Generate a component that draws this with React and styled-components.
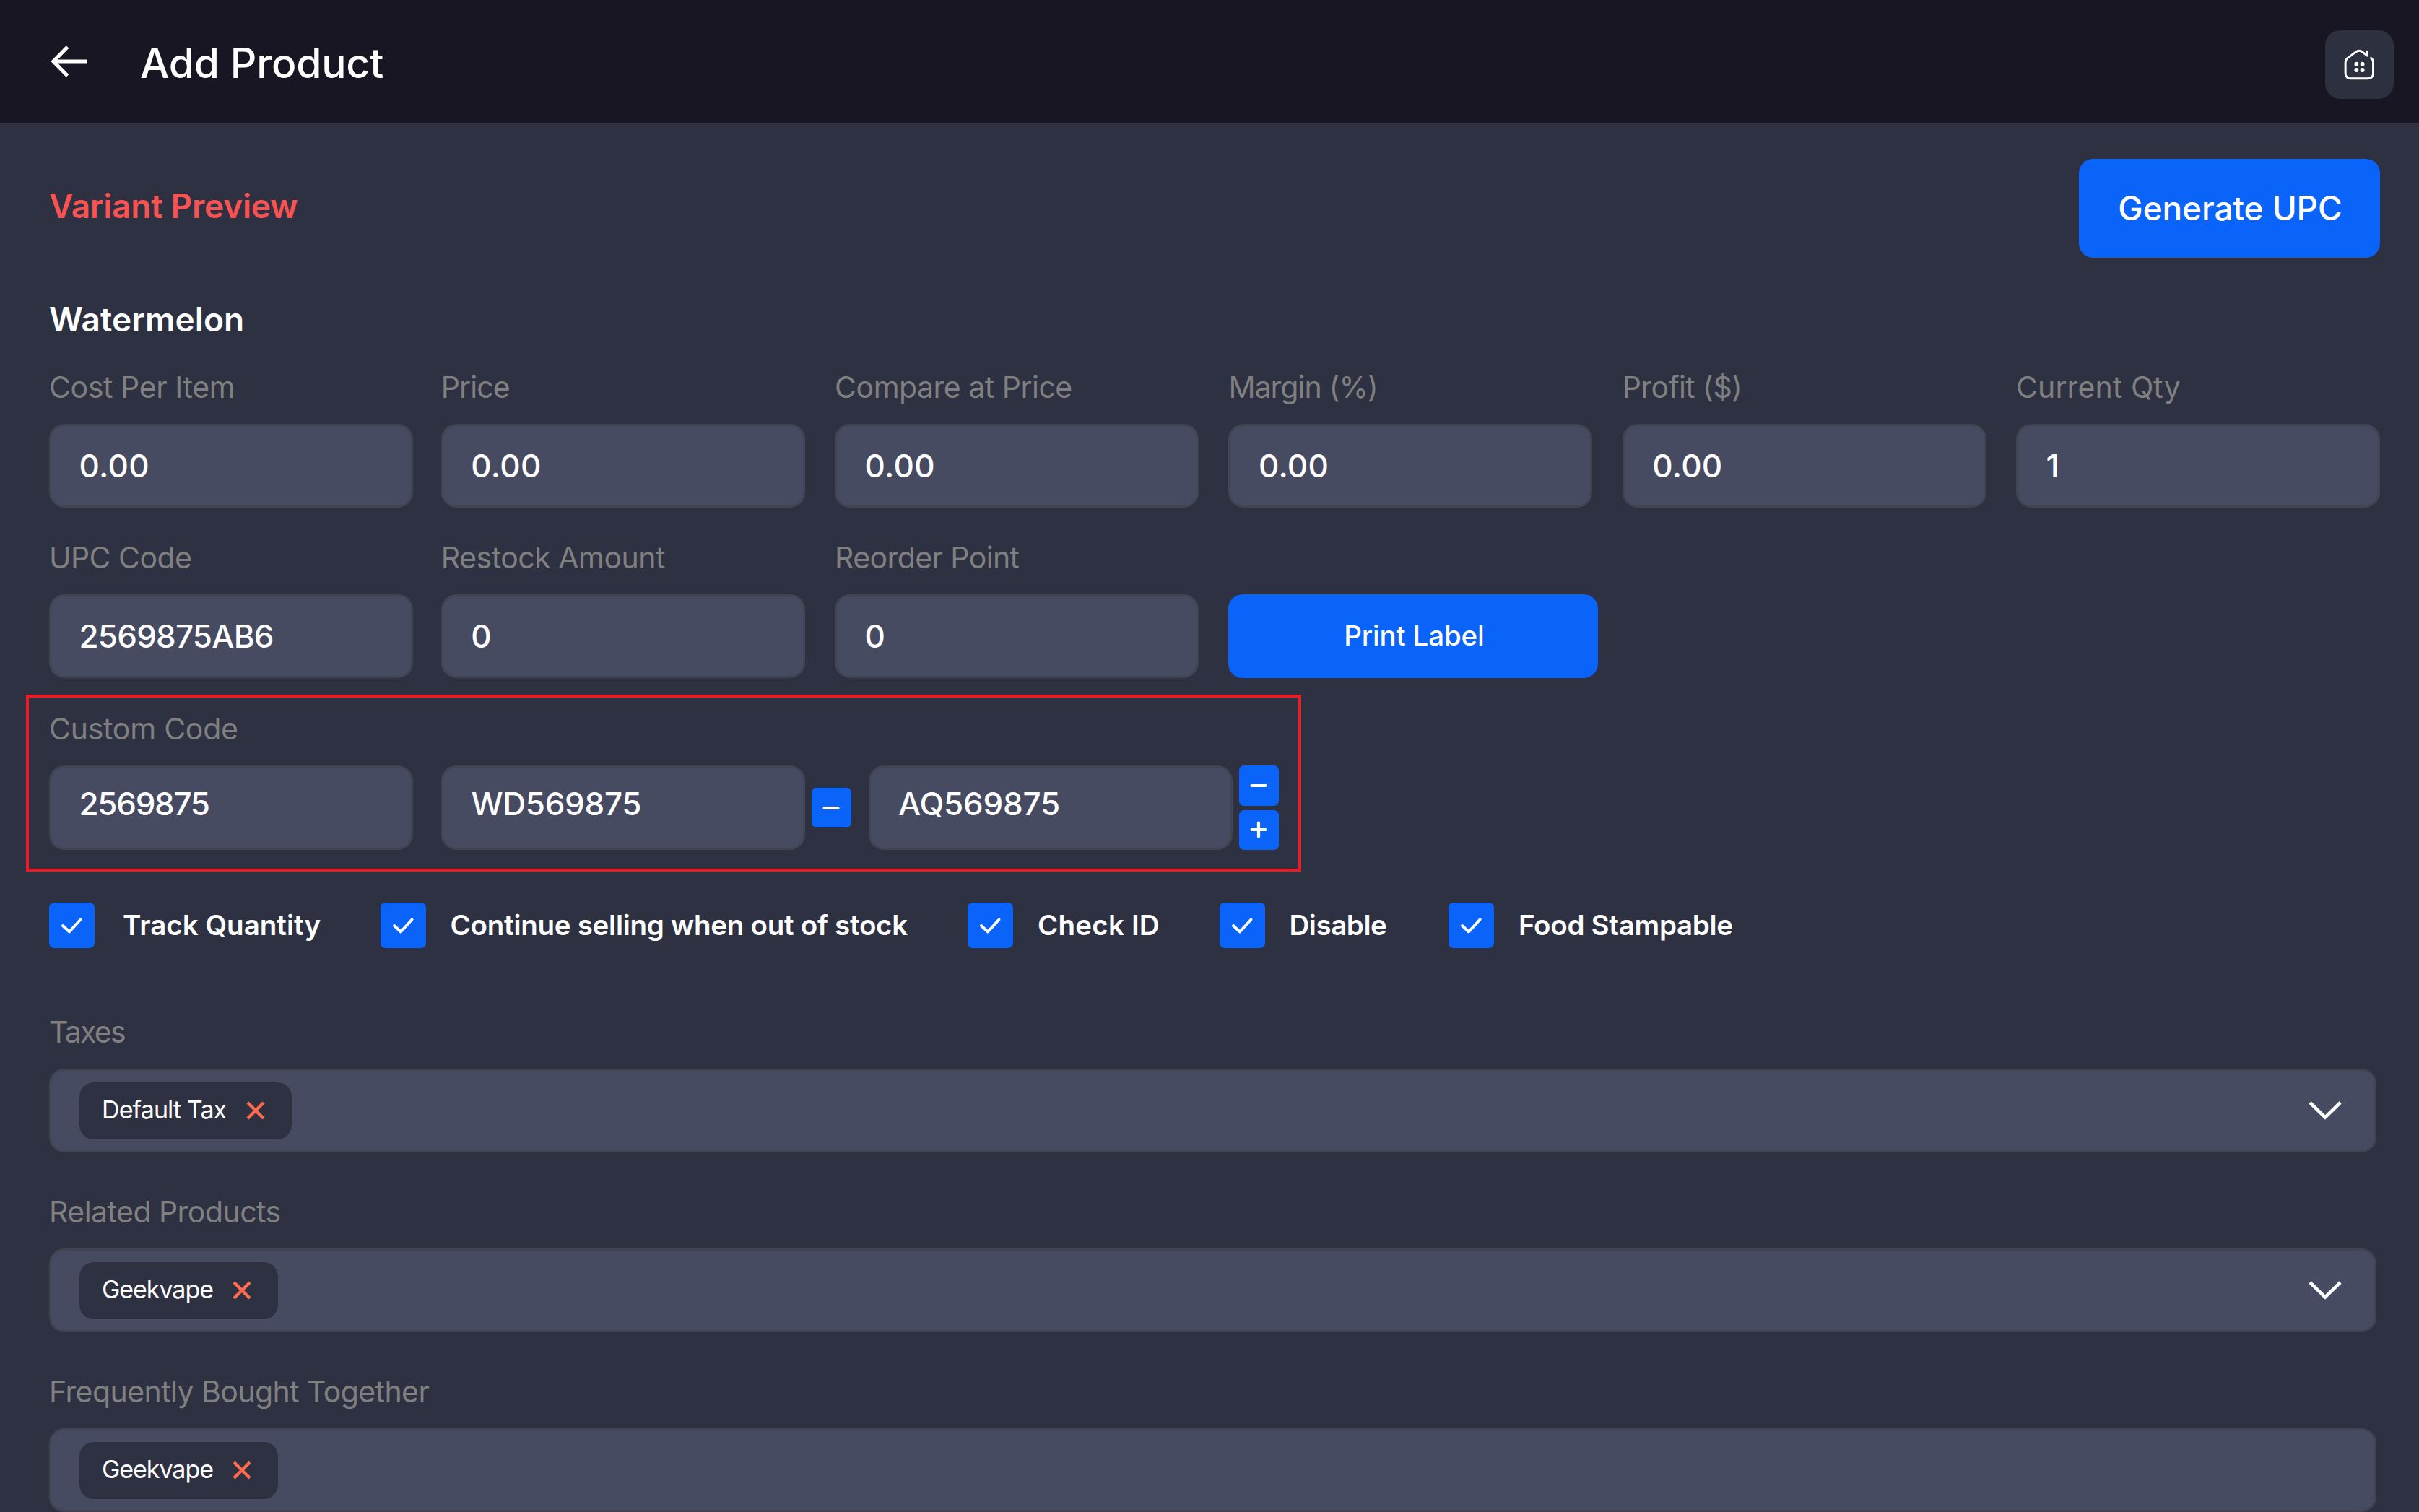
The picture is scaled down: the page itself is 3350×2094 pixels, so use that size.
import styled, { createGlobalStyle } from "styled-components";
import { useState } from "react";

const priceFields = [
  { label: "Cost Per Item", value: "0.00", spacing: -0.4 },
  { label: "Price", value: "0.00", spacing: -0.9 },
  { label: "Compare at Price", value: "0.00", spacing: -0.5 },
  { label: "Margin (%)", value: "0.00", spacing: -0.95 },
  { label: "Profit ($)", value: "0.00", spacing: -0.6 },
  { label: "Current Qty", value: "1", spacing: 0.1 },
];

const stockFields = [
  { label: "UPC Code", value: "2569875AB6", spacing: -0.55, valueSpacing: -0.8 },
  { label: "Restock Amount", value: "0", spacing: -0.5 },
  { label: "Reorder Point", value: "0", spacing: -0.6 },
];

const options = [
  { label: "Track Quantity", width: 459, gap: 39, spacing: 0 },
  { label: "Continue selling when out of stock", width: 812.5, gap: 33.5, spacing: -0.27 },
  { label: "Check ID", width: 349, gap: 34.5, spacing: 0.2 },
  { label: "Disable", width: 317, gap: 34, spacing: -0.45 },
  { label: "Food Stampable", width: 420, gap: 34.5, spacing: -0.3 },
];

const selects = [
  { label: "Taxes", tags: ["Default Tax"], spacing: -1.7, tagSpacing: -0.9 },
  { label: "Related Products", tags: ["Geekvape"], spacing: -0.53, tagSpacing: -1.05 },
  { label: "Frequently Bought Together", tags: ["Geekvape"], spacing: -0.57, tagSpacing: -1.05, hideArrow: true },
];

const BackIcon = () => (
  <svg width="52" height="46" viewBox="0 0 52 46" fill="none" stroke="#fff" strokeWidth="5.2">
    <path d="M50.5 23H4" />
    <path d="M23.5 3L4 23l19.5 20" />
  </svg>
);

const HomeIcon = () => (
  <svg width="95" height="95" viewBox="0 0 287 287" fill="none" stroke="#fff" strokeWidth="9" strokeLinecap="round" strokeLinejoin="round">
    <path d="M192 116c6 4 9 10 9 17v47c0 13-9 22-22 22h-72c-13 0-22-9-22-22v-45c0-8 3-14 9-19l34-25c9-7 19-7 27-1l21 16V88" />
    <g fill="#fff" stroke="none">
      <circle cx="131" cy="141" r="9" />
      <circle cx="156" cy="141" r="9" />
      <circle cx="131" cy="166" r="9" />
      <circle cx="156" cy="166" r="9" />
    </g>
  </svg>
);

const CheckIcon = () => (
  <svg width="63" height="63" viewBox="0 0 63 63" fill="none" stroke="#fff" strokeWidth="4" strokeLinecap="round" strokeLinejoin="round">
    <path d="M19 32l9 8.5L43.5 23.5" />
  </svg>
);

const CrossIcon = () => (
  <svg width="26" height="26" viewBox="0 0 26 26" stroke="#ff6b4e" strokeWidth="4.4">
    <path d="M2 2l22 22M24 2L2 24" />
  </svg>
);

const ChevronIcon = () => (
  <svg width="46" height="28" viewBox="0 0 46 28" fill="none" stroke="#fff" strokeWidth="4.6">
    <path d="M2 3l21 20.5L44 3" />
  </svg>
);

const SignIcon = ({ plus }) => (
  <svg width="24" height="24" viewBox="0 0 24 24" stroke="#fff" strokeWidth="4.2" strokeLinecap="round">
    <path d="M2.5 12h19" />
    {plus && <path d="M12 2.5v19" />}
  </svg>
);

const TagSelect = ({ label, tags, spacing, tagSpacing, hideArrow }) => {
  const [tagArr, setTagArr] = useState(tags);
  const eraseTag = (idx) => {
    setTagArr(tagArr.filter((_, i) => i !== idx));
  };
  return (
    <Field>
      <Label $spacing={spacing}>{label}</Label>
      <SelectBox>
        {tagArr.map((val, idx) => (
          <Tag key={idx} $spacing={tagSpacing}>
            {val}
            <TagEraseBtn onClick={() => eraseTag(idx)}>
              <CrossIcon />
            </TagEraseBtn>
          </Tag>
        ))}
        {!hideArrow && (
          <Arrow>
            <ChevronIcon />
          </Arrow>
        )}
      </SelectBox>
    </Field>
  );
};

const CheckItem = ({ label, width, gap, spacing }) => {
  const [checked, setChecked] = useState(true);
  return (
    <CheckContainer $width={width} $gap={gap} $spacing={spacing} onClick={() => setChecked(!checked)}>
      <CheckBox>{checked && <CheckIcon />}</CheckBox>
      <CheckText>{label}</CheckText>
    </CheckContainer>
  );
};

const App = () => {
  return (
    <Page>
      <GlobalStyle />
      <Header>
        <BackIcon />
        <Title>Add Product</Title>
        <HomeBtn>
          <HomeIcon />
        </HomeBtn>
      </Header>
      <Main>
        <TopRow>
          <PreviewTitle>Variant Preview</PreviewTitle>
          <GenerateBtn>Generate UPC</GenerateBtn>
        </TopRow>
        <VariantName>Watermelon</VariantName>
        <FieldGrid>
          {priceFields.map(({ label, value, spacing }) => (
            <Field key={label}>
              <Label $spacing={spacing}>{label}</Label>
              <InputBox $spacing={0.3}>{value}</InputBox>
            </Field>
          ))}
          {stockFields.map(({ label, value, spacing, valueSpacing }) => (
            <Field key={label}>
              <Label $spacing={spacing}>{label}</Label>
              <InputBox $spacing={valueSpacing}>{value}</InputBox>
            </Field>
          ))}
          <PrintBtn>Print Label</PrintBtn>
        </FieldGrid>
        <CustomBox>
          <Label $spacing={-0.25}>Custom Code</Label>
          <CodeRow>
            <CodeInput $spacing={-1.3}>2569875</CodeInput>
            <CodeGroup $before={39} $gap={8.5}>
              <CodeInput $spacing={-0.3}>WD569875</CodeInput>
              <SmallBtn>
                <SignIcon />
              </SmallBtn>
            </CodeGroup>
            <CodeGroup $before={24} $gap={9}>
              <CodeInput $spacing={-0.2}>AQ569875</CodeInput>
              <BtnStack>
                <SmallBtn>
                  <SignIcon />
                </SmallBtn>
                <SmallBtn>
                  <SignIcon plus />
                </SmallBtn>
              </BtnStack>
            </CodeGroup>
          </CodeRow>
        </CustomBox>
        <CheckRow>
          {options.map((option) => (
            <CheckItem key={option.label} {...option} />
          ))}
        </CheckRow>
        <SelectList>
          {selects.map((select) => (
            <TagSelect key={select.label} {...select} />
          ))}
        </SelectList>
      </Main>
    </Page>
  );
};

const GlobalStyle = createGlobalStyle`
  * {
    box-sizing: border-box;
  }
  body {
    margin: 0;
    background: #2e3142;
  }
  button {
    font-family: inherit;
    border: 0;
    padding: 0;
    cursor: pointer;
  }
  svg {
    display: block;
    flex-shrink: 0;
  }
`;

const Page = styled.div`
  width: 3350px;
  height: 2094px;
  overflow: hidden;
  background: #2e3142;
  color: #fff;
  font-family: Inter, "Liberation Sans", sans-serif;
`;

const Header = styled.header`
  display: flex;
  align-items: center;
  height: 170px;
  padding: 0 35px 0 70px;
  background: #191624;
`;

const Title = styled.h1`
  margin: 6px 0 0 72px;
  font-size: 57px;
  font-weight: 500;
  line-height: 70px;
  letter-spacing: -0.2px;
`;

const HomeBtn = styled.button`
  width: 95px;
  height: 95px;
  margin: 8px 0 0 auto;
  border-radius: 21px;
  background: #2d303e;
`;

const Main = styled.main`
  padding: 50px 54px 0 68px;
`;

const TopRow = styled.div`
  display: flex;
  justify-content: space-between;
  align-items: center;
  height: 137px;
`;

const PreviewTitle = styled.h2`
  margin: 0 0 7px;
  color: #f95252;
  font-size: 46px;
  font-weight: 600;
  line-height: 60px;
  letter-spacing: -0.23px;
`;

const BlueBtn = styled.button`
  border-radius: 20px;
  background: #0a64f9;
  color: #fff;
  font-weight: 500;
`;

const GenerateBtn = styled(BlueBtn)`
  width: 417px;
  height: 137px;
  padding: 0 0 2px 2px;
  font-size: 46px;
  letter-spacing: -0.11px;
`;

const PrintBtn = styled(BlueBtn)`
  align-self: end;
  width: 512px;
  height: 116px;
  padding: 0 0 2px 2px;
  font-size: 38.5px;
  letter-spacing: -0.15px;
`;

const VariantName = styled.h3`
  margin: 55px 0 39px;
  font-size: 46px;
  font-weight: 600;
  line-height: 60px;
  letter-spacing: 0.1px;
`;

const FieldGrid = styled.div`
  display: grid;
  grid-template-columns: 501.5px repeat(5, 504px);
  gap: 44px 41.3px;
`;

const Field = styled.div`
  display: flex;
  flex-direction: column;
  gap: 26px;
`;

const Label = styled.div`
  height: 50px;
  color: #808080;
  font-size: 41px;
  line-height: 51px;
  white-space: nowrap;
  letter-spacing: ${({ $spacing = 0 }) => $spacing}px;
`;

const InputBox = styled.div`
  display: flex;
  flex-shrink: 0;
  align-items: center;
  width: 504px;
  height: 116px;
  padding-left: 38.5px;
  border: 3px solid #424452;
  border-radius: 21px;
  background: #474b61;
  font-size: 44px;
  font-weight: 550;
  letter-spacing: ${({ $spacing = 0 }) => $spacing}px;
`;

const CustomBox = styled.section`
  display: flex;
  flex-direction: column;
  gap: 26px;
  width: 1766px;
  height: 245px;
  margin: 23px 0 43px -32px;
  padding: 18px 0 0 28px;
  border: 4px solid #ed1c24;
`;

const CodeRow = styled.div`
  display: flex;
  align-items: center;
`;

const CodeInput = styled(InputBox)`
  height: 117px;
  padding-bottom: 12px;
`;

const CodeGroup = styled.div`
  display: flex;
  align-items: center;
  gap: ${({ $gap }) => $gap}px;
  margin-left: ${({ $before }) => $before}px;
`;

const BtnStack = styled.div`
  display: flex;
  flex-direction: column;
  gap: 6px;
`;

const SmallBtn = styled.button`
  display: flex;
  flex-shrink: 0;
  align-items: center;
  justify-content: center;
  width: 55px;
  height: 55.5px;
  border-radius: 7px;
  background: #0a64f9;
`;

const CheckRow = styled.div`
  display: flex;
`;

const CheckContainer = styled.div`
  display: flex;
  align-items: center;
  gap: ${({ $gap }) => $gap}px;
  width: ${({ $width }) => $width}px;
  height: 63px;
  font-size: 38.5px;
  font-weight: 600;
  white-space: nowrap;
  letter-spacing: ${({ $spacing }) => $spacing}px;
`;

const CheckBox = styled.div`
  flex-shrink: 0;
  width: 63px;
  height: 63px;
  border-radius: 7px;
  background: #0a64f9;
`;

const CheckText = styled.span`
  padding-bottom: 2px;
  line-height: 60px;
`;

const SelectList = styled.div`
  display: flex;
  flex-direction: column;
  gap: 57px;
  width: 3223px;
  margin-top: 91px;
`;

const SelectBox = styled.div`
  display: flex;
  align-items: center;
  height: 116px;
  padding: 0 45px 0 39px;
  border: 3px solid #424452;
  border-radius: 21px;
  background: #474b61;
`;

const Tag = styled.div`
  display: flex;
  align-items: center;
  height: 79px;
  padding: 0 37px 2px 31px;
  border-radius: 20px;
  background: #2e3142;
  font-size: 34px;
  line-height: 40px;
  letter-spacing: ${({ $spacing }) => $spacing}px;
`;

const TagEraseBtn = styled.button`
  margin: 2px 0 0 27.5px;
  background: none;
`;

const Arrow = styled.div`
  margin-left: auto;
`;

export default App;
